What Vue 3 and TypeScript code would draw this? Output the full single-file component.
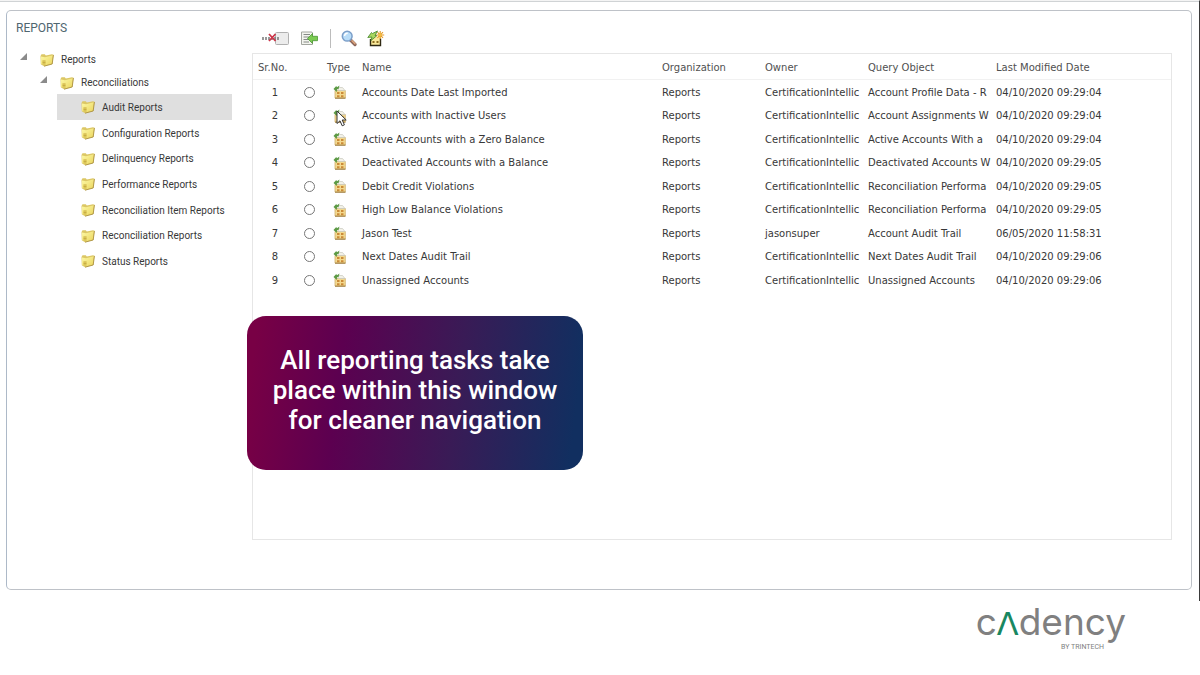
<script setup lang="ts">
import { ref } from 'vue'

interface Report {
  name: string
  owner: string
  query: string
  modified: string
}

const folders: string[] = [
  'Audit Reports',
  'Configuration Reports',
  'Delinquency Reports',
  'Performance Reports',
  'Reconciliation Item Reports',
  'Reconciliation Reports',
  'Status Reports',
]
const activeFolder = ref('Audit Reports')
const selected = ref<string | null>(null)

const system = 'CertificationIntellic'
const reports: Report[] = [
  { name: 'Accounts Date Last Imported', owner: system, query: 'Account Profile Data - R', modified: '04/10/2020 09:29:04' },
  { name: 'Accounts with Inactive Users', owner: system, query: 'Account Assignments W', modified: '04/10/2020 09:29:04' },
  { name: 'Active Accounts with a Zero Balance', owner: system, query: 'Active Accounts With a', modified: '04/10/2020 09:29:04' },
  { name: 'Deactivated Accounts with a Balance', owner: system, query: 'Deactivated Accounts W', modified: '04/10/2020 09:29:05' },
  { name: 'Debit Credit Violations', owner: system, query: 'Reconciliation Performa', modified: '04/10/2020 09:29:05' },
  { name: 'High Low Balance Violations', owner: system, query: 'Reconciliation Performa', modified: '04/10/2020 09:29:05' },
  { name: 'Jason Test', owner: 'jasonsuper', query: 'Account Audit Trail', modified: '06/05/2020 11:58:31' },
  { name: 'Next Dates Audit Trail', owner: system, query: 'Next Dates Audit Trail', modified: '04/10/2020 09:29:06' },
  { name: 'Unassigned Accounts', owner: system, query: 'Unassigned Accounts', modified: '04/10/2020 09:29:06' },
]
</script>

<template>
  <svg class="symbols" aria-hidden="true">
    <defs>
      <linearGradient id="folder-front" x1="0" y1="0" x2="1" y2="1">
        <stop offset="0" stop-color="#fdf9a6" />
        <stop offset="1" stop-color="#ead45c" />
      </linearGradient>
      <symbol id="folder" viewBox="0 0 14 14">
        <path d="M.5 3 1.500 1.200h3.300l1 1.300L12 1.200l1.600.6-1.300 9.200-8.300 2.200-3.200-2z" fill="#dcc765" />
        <path d="M1 3.600 5 4.200l8-1.900-1.200 8.400L4 12.600 1.100 10.800z" fill="url(#folder-front)" />
        <path d="M13.400 2 12.200 11 4 13.200" fill="none" stroke="#ab9140" stroke-width=".9" />
        <path d="M2.300 7.500h3.400v3.800H2.300z" fill="#ecd968" />
        <path d="M2.500 8h3M2.500 9.500h3M2.500 11h3" stroke="#b99c38" stroke-width=".7" />
      </symbol>
      <symbol id="report" viewBox="0 0 13 14">
        <path d="M2 5.500h10.300V13H2z" fill="#f3d98f" stroke="#d0b06c" stroke-width=".8" />
        <path d="M5.500 2.500h4l2.500 3H5z" fill="#f2f1e8" stroke="#c9c8bd" stroke-width=".7" />
        <path d="M4 7h2.500v2H4zM8 7h2.500v2H8zM4 10.300h2.500v2H4zM8 10.300h2.500v2H8z" fill="#cb8b38" />
        <path d="M2 13.200h10.500" stroke="#9b7a3e" />
        <path d="M.5 4 3.200 1l.8 1.200L6.500.6 5.500 4 4 4.300 3.800 7z" fill="#5c9a45" />
      </symbol>
    </defs>
  </svg>

  <div class="page">
    <div class="screen">
      <section class="panel">
        <aside class="sidebar">
          <h1>REPORTS</h1>
          <ul class="tree">
            <li>
              <div class="branch"><i class="arrow"></i><svg class="folder"><use href="#folder" /></svg>Reports</div>
              <ul class="nested">
                <li>
                  <div class="branch"><i class="arrow"></i><svg class="folder"><use href="#folder" /></svg>Reconciliations</div>
                  <ul class="leaves">
                    <li v-for="folder in folders" :key="folder">
                      <button class="leaf" :class="{ active: folder === activeFolder }" type="button" @click="activeFolder = folder">
                        <svg class="folder"><use href="#folder" /></svg>{{ folder }}
                      </button>
                    </li>
                  </ul>
                </li>
              </ul>
            </li>
          </ul>
        </aside>

        <main class="content">
          <div class="toolbar">
            <button type="button" aria-label="Rename">
              <svg width="28" height="16" viewBox="0 0 28 16">
                <rect x="13.500" y="2.500" width="13" height="12" rx="1" fill="#ececec" stroke="#b0b0b0" />
                <path d="M0 8.500h18" stroke="#777" stroke-width="3" stroke-dasharray="2 1" opacity=".75" />
                <path d="m7 4 6.500 7M13.500 4 7 11" stroke="#cc3448" stroke-width="1.800" />
              </svg>
            </button>
            <button type="button" aria-label="Export">
              <svg width="18" height="16" viewBox="0 0 18 16">
                <path d="M1.500 2h10.300l.7 1v11.500h-11z" fill="#f3f4ef" stroke="#a3a69f" />
                <path d="M3.500 4.500H10M3.500 7H9M3.500 9.500H9M3.500 12H9" stroke="#858a85" />
                <path d="m7.500 8.500 5-5v2.800H17.500v4.400h-5v2.800z" fill="#7bcb52" stroke="#4c9636" stroke-width=".8" />
              </svg>
            </button>
            <span class="divider"></span>
            <button type="button" aria-label="Search">
              <svg width="16" height="17" viewBox="0 0 16 17">
                <path d="m9.500 10 4.500 4.500" stroke="#8a655a" stroke-width="3.200" stroke-linecap="round" />
                <path d="m11 10.800 3 3" stroke="#e0a67c" stroke-width="1.500" stroke-linecap="round" />
                <circle cx="6.200" cy="6.200" r="4.900" fill="#b9ddf8" stroke="#7c9fc9" stroke-width="1.500" />
                <path d="M3.500 6c.2-1.700 1.400-2.700 3.200-2.700" fill="none" stroke="#fff" stroke-width="1.500" />
              </svg>
            </button>
            <button type="button" aria-label="New report">
              <svg width="18" height="17" viewBox="0 0 18 17">
                <path d="M3.500 6.500h10v9h-10z" fill="#f9e89a" />
                <path d="M3.500 9v6.500h10V8.500" fill="none" stroke="#2f2913" stroke-width="1.400" />
                <path d="M5.500 11h2v2h-2zM9.500 11h2v2h-2z" fill="#8a6b1f" />
                <path d="M.8 7.500 4.500 2.500l1 1L10.500 1 8 5.500H10L4 10.500l1-3.500z" fill="#a9d75f" stroke="#4f8d36" stroke-width=".9" />
                <path d="M13.200 1v8M9.200 5h8M10.400 2.200l5.600 5.600M16 2.200l-5.600 5.600" stroke="#e39a28" stroke-width="1.100" />
                <circle cx="13.200" cy="5" r="1.800" fill="#f4bc43" />
              </svg>
            </button>
          </div>

          <div class="grid">
            <table>
              <colgroup>
                <col class="c-no" /><col class="c-pick" /><col class="c-type" /><col class="c-name" />
                <col class="c-org" /><col class="c-org" /><col class="c-query" /><col />
              </colgroup>
              <thead>
                <tr>
                  <th>Sr.No.</th><th></th><th>Type</th><th>Name</th><th>Organization</th><th>Owner</th><th>Query Object</th><th>Last Modified Date</th>
                </tr>
              </thead>
              <tbody>
                <tr v-for="(report, i) in reports" :key="report.name">
                  <td class="middle">{{ i + 1 }}</td>
                  <td class="middle">
                    <input v-model="selected" type="radio" name="report" :value="report.name" :aria-label="report.name" />
                  </td>
                  <td class="kind">
                    <svg class="report"><use href="#report" /></svg>
                    <svg v-if="i === 1" class="pointer" viewBox="0 0 11 17">
                      <path d="M1 1v12.500l3-2.700 2.200 5 2.200-1-2.200-4.800h4z" fill="#fff" stroke="#333" />
                    </svg>
                  </td>
                  <td>{{ report.name }}</td>
                  <td>Reports</td>
                  <td>{{ report.owner }}</td>
                  <td>{{ report.query }}</td>
                  <td>{{ report.modified }}</td>
                </tr>
              </tbody>
            </table>
          </div>

          <p class="callout">All reporting tasks take<br />place within this window<br />for cleaner navigation</p>
        </main>
      </section>
    </div>

    <footer>
      <div class="brand">
        <div class="wordmark">c<span>Λ</span>dency</div>
        <div class="byline">BY TRINTECH</div>
      </div>
    </footer>
  </div>
</template>

<style>
body {
  margin: 0;
  background: #fff;
}
</style>

<style scoped>
.symbols {
  position: absolute;
  width: 0;
  height: 0;
}
.page {
  font-family: Roboto, 'Liberation Sans', sans-serif;
  color: #383838;
}
.screen {
  padding: 7px 7px 11px 6px;
  border-top: 1px solid #f4f4f4;
  border-right: 1px solid #3a3a3a;
  box-shadow: inset 0 1px #d0d3d5;
}
.panel {
  display: flex;
  gap: 20px;
  margin-top: 2px;
  padding: 0 19px 49px 0;
  border: 1px solid #bec2c8;
  border-left-color: #adb9c8;
  border-radius: 5px;
}
.sidebar {
  flex: 0 0 225px;
  min-width: 0;
}
h1 {
  margin: 9px 0 11px 9px;
  font-size: 12px;
  font-weight: 400;
  line-height: 17px;
  color: #4f6670;
}
ul {
  margin: 0;
  padding: 0;
  list-style: none;
}
.tree {
  padding-left: 13px;
  font-size: 10px;
}
.nested {
  padding-left: 20px;
}
.leaves {
  padding-left: 17px;
}
.branch {
  display: flex;
  align-items: center;
  height: 23px;
}
.arrow {
  width: 7px;
  height: 7px;
  margin: 0 13px 6px 0;
  background: #8b8b8b;
  clip-path: polygon(100% 0, 100% 100%, 0 100%);
}
.folder {
  flex: none;
  width: 14px;
  height: 14px;
  margin-right: 7px;
}
.leaf {
  display: flex;
  align-items: center;
  width: 100%;
  height: 26px;
  padding: 0 0 0 24px;
  border: 0;
  background: none;
  color: inherit;
  font: inherit;
  white-space: nowrap;
}
li:nth-child(3n) > .leaf {
  height: 25px;
}
.leaf.active {
  background: #dfdfdf;
}
.content {
  position: relative;
  flex: 1;
  min-width: 0;
}
.toolbar {
  display: flex;
  align-items: center;
  gap: 10px;
  height: 42px;
  padding: 12px 0 0 10px;
  box-sizing: border-box;
}
.toolbar button {
  display: flex;
  padding: 0;
  border: 0;
  background: none;
}
.divider {
  width: 1px;
  height: 19px;
  margin-left: 2px;
  background: #bcbcbc;
}
.grid {
  min-height: 485px;
  border: 1px solid #e6e6e6;
}
table {
  width: 100%;
  border-collapse: collapse;
  table-layout: fixed;
  font-family: 'DejaVu Sans', sans-serif;
  font-size: 10px;
}
.c-no { width: 44px; }
.c-pick { width: 25px; }
.c-type { width: 35px; }
.c-name { width: 300px; }
.c-org { width: 103px; }
.c-query { width: 128px; }
th,
td {
  padding: 0 0 0 5px;
  overflow: hidden;
  text-align: left;
  font-weight: 400;
  white-space: nowrap;
}
th {
  height: 23px;
  padding-top: 2px;
  border-bottom: 1px solid #f1f1f1;
  color: #505050;
}
td {
  height: 23px;
}
tbody tr:nth-child(odd) td {
  height: 24px;
}
td.middle {
  padding: 0;
  text-align: center;
}
td.kind {
  position: relative;
  padding: 0;
  overflow: visible;
  text-align: center;
}
input {
  display: block;
  width: 11px;
  height: 11px;
  margin: 0 auto;
  appearance: none;
  border: 1px solid #777;
  border-radius: 50%;
  background: #fff;
}
input:checked {
  background: radial-gradient(#555 40%, #fff 45%);
}
.report {
  display: block;
  width: 13px;
  height: 14px;
  margin: 0 auto;
}
.pointer {
  position: absolute;
  top: 6px;
  left: 14px;
  width: 11px;
  height: 17px;
}
.callout {
  position: absolute;
  top: 305px;
  left: -5px;
  width: 336px;
  margin: 0;
  padding: 29px 0 35px;
  border-radius: 19px;
  background: linear-gradient(97deg, #780045 3%, #5c0050 28%, #391b56 62%, #112f60 96%);
  color: #fff;
  font-size: 26px;
  font-weight: 500;
  line-height: 30px;
  text-align: center;
}
footer {
  display: flex;
  justify-content: flex-end;
  padding: 2px 74px 0 0;
}
.brand {
  color: #808080;
}
.wordmark {
  font-family: Inter, sans-serif;
  font-size: 37px;
  font-weight: 400;
  line-height: 38px;
}
.wordmark span {
  color: #188761;
  font-family: 'DejaVu Sans', sans-serif;
  font-size: 32px;
}
.byline {
  padding-right: 22px;
  font-size: 7px;
  line-height: 8px;
  text-align: right;
}
</style>
